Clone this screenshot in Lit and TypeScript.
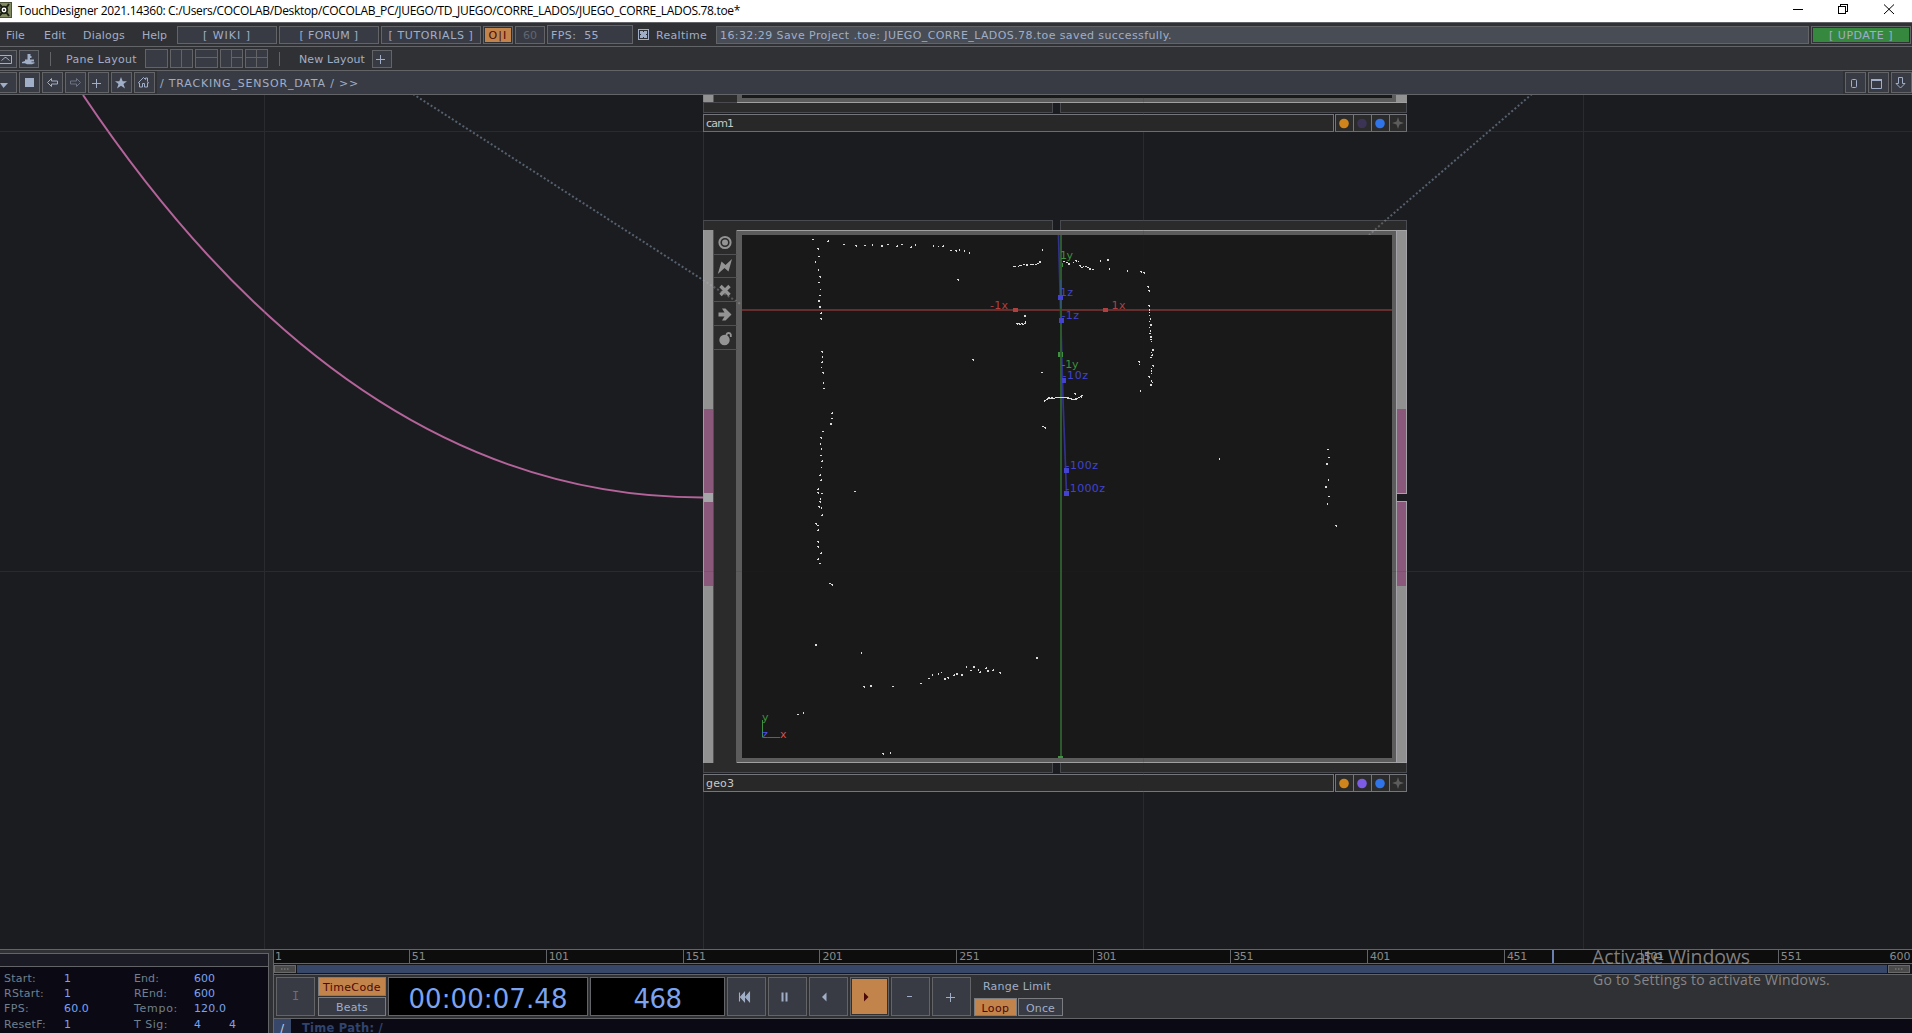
import { LitElement, html, svg, css } from "lit";
import { customElement } from "lit/decorators.js";
import { styleMap } from "lit/directives/style-map.js";

const UI = '"DejaVu Sans", Verdana, sans-serif';
const WIN = '"Open Sans", "Noto Sans", sans-serif';
const pen = document.createElement("canvas").getContext("2d")!;

/** Tracks a label so that it spans the given number of pixels. */
function label(text: string, width: number, size = 11, family = UI, weight = "400") {
  pen.font = `${weight} ${size}px ${family}`;
  const gap = (width + 1 - pen.measureText(text).width) / text.length;
  return html`<span
    class="label"
    style=${styleMap({ fontFamily: family, fontSize: `${size}px`, fontWeight: weight, letterSpacing: `${gap.toFixed(3)}px` })}
    >${text}</span
  >`;
}

const shared = css`
  * {
    box-sizing: border-box;
  }
  .label {
    white-space: pre;
    line-height: 1;
    display: block;
    flex: none;
  }
  svg {
    display: block;
    flex: none;
  }
`;

@customElement("title-bar")
class TitleBar extends LitElement {
  static styles = [
    shared,
    css`
      :host {
        display: flex;
        height: 22px;
        background: #fff;
        color: #000;
        align-items: center;
      }
      .name {
        margin-left: 6px;
        margin-top: 0;
        flex: 1;
      }
    `,
  ];
  render() {
    return html`
      <svg width="12" height="22" viewBox="0 0 12 22">
        <rect x="0" y="2" width="12" height="16" fill="#4c5238" />
        <rect x="0" y="3" width="11" height="14" fill="#828a62" />
        <path d="M-1 4l4 4M9 4l-3 4M-1 16l4-4M9 16l-3-4" stroke="#1c2014" stroke-width="2" />
        <circle cx="4" cy="10" r="4.2" fill="#1c2014" />
        <circle cx="4" cy="10" r="2.4" fill="#fff" />
        <circle cx="4" cy="10" r="1" fill="#1c2014" />
      </svg>
      <div class="name">
        ${label(
          "TouchDesigner 2021.14360: C:/Users/COCOLAB/Desktop/COCOLAB_PC/JUEGO/TD_JUEGO/CORRE_LADOS/JUEGO_CORRE_LADOS.78.toe*",
          721,
          12,
          WIN,
        )}
      </div>
      <svg width="120" height="22" viewBox="1792 0 120 22" fill="none" stroke="#000" shape-rendering="crispEdges">
        <path d="M1793 9.500h10M1838.500 6.500h7v7h-7zM1840.500 6v-1.500h7v7h-2" />
        <path d="M1884 4.500l10 9.500M1894 4.500l-10 9.500" shape-rendering="auto" />
      </svg>
    `;
  }
}

@customElement("menu-bar")
class MenuBar extends LitElement {
  static styles = [
    shared,
    css`
      :host {
        display: block;
        color: #a0aec8;
      }
      .row {
        display: flex;
        height: 24px;
        background: #303134;
        border-top: 1px solid #626468;
      }
      .items {
        width: 177px;
        display: flex;
        padding: 7px 0 0 6px;
        flex: none;
      }
      .btn {
        height: 18px;
        margin: 3px 2px 0 0;
        border: 1px solid #626468;
        background: #383b43;
        display: flex;
        align-items: center;
        justify-content: center;
        flex: none;
      }
      .text {
        padding-top: 1px;
      }
      .link {
        width: 100px;
      }
      .small {
        width: 30px;
      }
      .oi {
        width: 30px;
        color: #4d0808;
        background: #c2844a;
        box-shadow: inset 0 0 0 1px #303134;
      }
      .off {
        color: #626672;
      }
      .fps {
        width: 86px;
        height: 19px;
        margin: 2px 5px 0 0;
        justify-content: flex-start;
        padding-left: 3px;
      }
      .check {
        margin-top: 6px;
      }
      .real {
        width: 60px;
        padding: 7px 0 0 0;
        margin-left: 7px;
      }
      .status {
        flex: 1;
        justify-content: flex-start;
        padding-left: 3px;
        background: #484c54;
      }
      .update {
        width: 100px;
        margin-right: 1px;
        background: #36883f;
        box-shadow: inset 0 0 0 1px #303134;
      }
      .layouts {
        height: 24px;
      }
      .tool {
        width: 20px;
        margin-right: 0;
      }
      .first {
        width: 17px;
        border-left: 0;
        margin-right: 2px;
      }
      .sep {
        width: 1px;
        height: 14px;
        background: #626468;
        margin-top: 5px;
      }
      .pane {
        padding: 7px 0 0 15px;
        width: 94px;
      }
      .grid {
        display: flex;
        gap: 2px;
        padding-top: 2px;
        width: 134px;
      }
      .newl {
        width: 92px;
        padding: 7px 0 0 19px;
      }
      .path {
        height: 25px;
        background: #303134;
        border-bottom: 1px solid #626468;
        gap: 2px;
      }
      .nav {
        width: 21px;
        height: 21px;
        margin: 1px 0 0 0;
      }
      .nav0 {
        width: 17px;
        border-left: 0;
      }
      .crumbs {
        flex: 1;
        background: #383b43;
        padding: 7px 0 0 3px;
      }
    `,
  ];
  render() {
    const layouts = ["", "M11.500 1v17", "M1 8.500h21", "M11.500 1v17M12 8.500h10", "M11.500 1v17M1 8.500h21"];
    return html`
      <div class="row">
        <div class="items">
          <div style="width:38px">${label("File", 18)}</div>
          <div style="width:39px">${label("Edit", 21)}</div>
          <div style="width:59px">${label("Dialogs", 41)}</div>
          ${label("Help", 24)}
        </div>
        <div class="btn text link">${label("[ WIKI ]", 47)}</div>
        <div class="btn text link">${label("[ FORUM ]", 58)}</div>
        <div class="btn text link">${label("[ TUTORIALS ]", 84)}</div>
        <div class="btn text oi">${label("O|I", 18)}</div>
        <div class="btn text small off">${label("60", 13)}</div>
        <div class="btn text fps">${label("FPS:  55", 47)}</div>
        <svg class="check" width="11" height="11" viewBox="0 0 11 11">
          <rect x=".5" y=".5" width="10" height="10" fill="none" stroke="#a0aec8" />
          <path d="M2 2h3v1h1v-1h3v3h-1v1h1v3h-3v-1h-1v1h-3v-3h1v-1h-1z" fill="#a0aec8" />
        </svg>
        <div class="real">${label("Realtime", 50)}</div>
        <div class="btn text status">
          ${label("16:32:29 Save Project .toe: JUEGO_CORRE_LADOS.78.toe saved successfully.", 451)}
        </div>
        <div class="btn text update">${label("[ UPDATE ]", 63)}</div>
      </div>
      <div class="row layouts">
        <div class="btn tool first">
          <svg width="16" height="16" viewBox="0 0 16 16" fill="none" stroke="#a0aec8">
            <path d="M0 4.500h11.500v8H0M1.500 9.500l3.500-3h1l3.500 3" />
          </svg>
        </div>
        <div class="btn tool">
          <svg width="18" height="16" viewBox="0 0 18 16" fill="#a0aec8">
            <path d="M7.500 3h3v2h1v2h-1.500v1.500h4v2h-2.500v.8h3v1l-2.500 1H7l-2-1H2v-1.300l3-1V8.500h2.500z" />
          </svg>
        </div>
        <div class="sep" style="margin-left:11px"></div>
        <div class="pane">${label("Pane Layout", 70)}</div>
        <div class="grid">
          ${layouts.map(
            (d) => html`<svg width="23" height="19" viewBox="0 0 23 19" fill="none" stroke="#626468">
              <rect x=".5" y=".5" width="22" height="18" fill="#383b43" />
              <path d=${d} />
            </svg>`,
          )}
        </div>
        <div class="sep"></div>
        <div class="newl">${label("New Layout", 65)}</div>
        <div class="btn tool">
          <svg width="18" height="16" viewBox="0 0 18 16" stroke="#a0aec8"><path d="M3 8.500h9M7.500 4v9" /></svg>
        </div>
      </div>
      <div class="row path">
        <div class="btn nav nav0">
          <svg width="16" height="19" viewBox="0 0 16 19"><path d="M0 10h8l-4.500 5z" fill="#a0aec8" /></svg>
        </div>
        <div class="btn nav">
          <svg width="19" height="19"><rect x="5" y="5" width="9" height="9" fill="#a0aec8" /></svg>
        </div>
        ${[
          svg`<path d="M4.500 9.500l4-4v2.500h6v3h-6v2.500z" stroke="#a0aec8" fill="none"/>`,
          svg`<path d="M14.500 9.500l-4-4v2.500h-6v3h6v2.500z" stroke="#6d7382" fill="none"/>`,
          svg`<path d="M3 10.500h9M7.500 6v9" stroke="#a0aec8"/>`,
          svg`<path d="M9 4l1.700 4.200H15l-3.500 2.700L13 15.500 9 12.700 5 15.500l1.500-4.600L3 8.200h4.300z" fill="#a0aec8"/>`,
          svg`<path d="M3.500 9.500L8.500 4.500l2 2v-1.500h2v3.500l1 1.500h-1v4h-3v-3.500H7.500v3.500h-3v-4h-1z" stroke="#a0aec8" fill="none"/>`,
        ].map((d) => html`<div class="btn nav"><svg width="19" height="19" viewBox="0 0 19 19">${d}</svg></div>`)}
        <div class="crumbs">${label("/ TRACKING_SENSOR_DATA / >>", 198)}</div>
        <div class="btn nav">
          <svg width="19" height="19" viewBox="0 0 19 19" fill="none" stroke="#a0aec8"><rect x="5.500" y="6.500" width="5" height="8" rx="1" /></svg>
        </div>
        <div class="btn nav">
          <svg width="19" height="19" viewBox="0 0 19 19" fill="none" stroke="#a0aec8"><path d="M2 6.500h11M2.500 6v9.500h10V6M2 7.500h11" /></svg>
        </div>
        <div class="btn nav">
          <svg width="19" height="19" viewBox="0 0 19 19" fill="none" stroke="#a0aec8"><path d="M6.500 4.500h4v6H13l-4.500 4.500L4 10.500h2.500z" /></svg>
        </div>
      </div>
    `;
  }
}

/* x, y and a shape code per scanned point:
   h = 2x1, v = 1x2, s = 2x2, d = single, j and l = corner pieces */
const SCAN = `812,239h 827,240j 817,248l 818,256h 815,261v 818,269v 819,276l 818,282h 820,289d 819,295h 818,300s 819,306s
820,312j 820,318l 821,351l 822,356v 821,361j 821,367d 843,244h 855,245l 864,245h 872,244v 881,245s 887,244h 896,245j 901,244h
910,246j 915,244v 933,245v 938,246d 942,245j 950,250h 955,250l 959,249v 964,250v 969,252v 957,279l 972,359l 1042,249v 1039,261s
1013,266h 1015,266d 1018,266d 1019,265h 1021,265d 1023,264h 1026,264s 1030,264h 1032,264h 1035,264h 1037,263h 1024,315s
1016,323h 1017,324d 1018,323h 1019,324h 1021,323h 1022,324h 1024,323h 1025,321v 1063,261h 1066,262h 1068,263s 1073,262d
1075,260l 1078,261d 1079,265l 1081,267h 1083,266d 1085,266h 1087,267h 1089,268s 1092,269h 1100,260v 1107,259s 1109,268v
1127,270v 1140,271l 1143,272l 1147,286l 1148,290l 1148,305l 1149,309v 1149,312d 1149,315d 1150,318v 1149,321d 1150,324s
1149,327d 1150,330v 1149,333h 1150,336s 1150,339h 1151,341d 1152,349s 1151,352d 1152,354d 1151,355h 1150,357h 1152,365l
1151,368d 1151,370v 1151,373d 1148,376l 1151,380v 1152,382d 1150,384s 1140,390v 1138,361l 1139,364d 1041,372h 1044,401d
1044,400h 1046,399h 1047,398h 1048,397h 1048,398h 1050,398h 1051,397h 1052,398h 1053,398h 1055,397h 1057,397h 1059,397h
1061,397h 1063,397h 1065,397h 1067,397h 1067,398h 1069,398h 1071,398d 1071,399h 1073,399h 1075,398s 1077,398d 1078,397h
1080,396l 1081,395h 1074,393l
1042,426h 1044,427l 1219,458v 1327,449h 1328,457h 1326,463s 1328,479v 1325,486s 1328,496h 1327,503v 1335,525l 822,372l
823,382v 823,388h 831,412j 831,418h 830,423s 822,431h 820,437l 820,443v 821,448v 820,455h 821,460j 821,467d 819,474j 820,479j
817,488j 817,492l 821,493h 820,498v 819,501l 818,506l 821,507v 821,514j 815,523l 817,525h 817,529j 817,541l 817,546l 820,552j
817,558j 819,563h 829,583h 831,584l 854,491h 815,644s 861,652v 1036,657s 966,666v 973,666s 970,670h 978,669v 979,671j
985,667j 987,670s 992,669j 999,672l 941,672d 938,673v 932,674v 928,678h 944,678s 947,677l 953,674j 956,673s 961,674s
920,683h 863,686l 870,685s 892,686h 797,714h 803,712v 882,753l 890,752v`;

const SHAPES: Record<string, string> = {
  h: "h2v1h-2z",
  v: "h1v2h-1z",
  s: "h2v2h-2z",
  d: "h1v1h-1z",
  l: "h2v2h-1v-1h-1z",
  j: "m1 0h1v2h-2v-1h1z",
};
const scanPath = SCAN.trim()
  .split(/\s+/)
  .map((p) => `M${p.slice(0, -1)}${SHAPES[p.slice(-1)]}`)
  .join("");

@customElement("network-editor")
class NetworkEditor extends LitElement {
  static styles = [
    shared,
    css`
      :host {
        display: block;
        height: 854px;
        background: #1b1c20;
        overflow: hidden;
      }
      text {
        font-family: "DejaVu Sans", Verdana, sans-serif;
        font-size: 11px;
      }
      .name {
        fill: #c8c8c8;
        font-size: 11px;
      }
      .r {
        fill: #b04040;
      }
      .g {
        fill: #3f9040;
      }
      .b {
        fill: #4343cf;
      }
    `,
  ];

  private strip(y: number) {
    return svg`<g fill="#2b2b2b" stroke="#4a4b50">
      <rect x="703.500" y=${y + 0.5} width="349" height="10"/>
      <rect x="1060.500" y=${y + 0.5} width="346" height="10"/></g>`;
  }

  private nameRow(y: number, name: string, w: number, viewer: string) {
    return svg`<g stroke="#74767c" fill="#282829">
        <rect x="703.500" y=${y + 0.5} width="630" height="17"/>
        <rect x="1335.500" y=${y + 0.5} width="71" height="17" fill="#2b2b2b"/>
        <path d="M1353.500 ${y}v18M1371.500 ${y}v18M1389.500 ${y}v18"/></g>
      <text class="name" x="706" y=${y + 13} textLength=${w}>${name}</text>
      <circle cx="1344" cy=${y + 9.5} r="4.800" fill="#d0851c"/>
      <circle cx="1362" cy=${y + 9.5} r="4.800" fill=${viewer}/>
      <circle cx="1380" cy=${y + 9.5} r="4.800" fill="#2f74e8"/>
      <path transform="translate(1398 ${y + 9})" d="M0-6L1.500-1.500 6 0 1.500 1.500 0 6-1.500 1.500-6 0-1.500-1.500z" fill="#5c5c5c"/>`;
  }

  private grid(opacity: number) {
    return svg`<g opacity=${opacity} fill="#2a2b30">
      <rect x="264" y="95" width="1" height="854"/><rect x="703" y="95" width="1" height="854" fill="#2d2c3c"/>
      <rect x="1143" y="95" width="1" height="854"/><rect x="1583" y="95" width="1" height="854"/>
      <rect x="0" y="131" width="1912" height="1"/><rect x="0" y="571" width="1912" height="1"/></g>`;
  }

  render() {
    return html`<svg width="1912" height="854" viewBox="0 95 1912 854">
      ${this.grid(1)}
      <path d="M83 95Q353 498 703 497.500" fill="none" stroke="#b4649a" stroke-width="2" />
      <g stroke="#56616f" stroke-width="2" stroke-dasharray="2 2.200">
        <path d="M413 94L703 280" />
        <path d="M1532 94L1386 220" />
      </g>

      <!-- cam1 -->
      <rect x="703" y="95" width="704" height="8" fill="#5c5c5c" />
      <rect x="703" y="95" width="10" height="8" fill="#929292" />
      <rect x="714" y="95" width="23" height="8" fill="#2b2b2b" />
      <rect x="742" y="95" width="650" height="3" fill="#191919" />
      <rect x="737" y="102" width="670" height="1" fill="#a0a0a0" />
      <rect x="1396" y="95" width="11" height="8" fill="#929292" />
      ${this.strip(102)} ${this.nameRow(114, "cam1", 28, "#3c3454")}
      <rect x="737" y="102" width="670" height="1" fill="#a0a0a0" />

      <!-- geo3 -->
      ${this.strip(220)} ${this.strip(762)}
      <rect x="703" y="230" width="704" height="533" fill="#2b2b2b" />
      <rect x="703" y="230" width="10" height="533" fill="#929292" />
      <rect x="703" y="230" width="1" height="533" fill="#aeaeb8" />
      <rect x="713" y="230" width="1" height="533" fill="#515154" />
      <rect x="704" y="409" width="9" height="177" fill="#89587a" />
      <rect x="704" y="493" width="9" height="9" fill="#a4a6a8" />
      <rect x="736" y="230" width="661" height="533" fill="#5c5c5c" />
      <rect x="737" y="230" width="670" height="1" fill="#a0a0a0" />
      <rect x="737" y="762" width="670" height="1" fill="#a0a0a0" />
      <rect x="1396" y="230" width="11" height="533" fill="#a4a4a8" />
      <rect x="1397" y="231" width="9" height="531" fill="#909090" />
      <rect x="1397" y="409" width="9" height="177" fill="#89587a" />
      <rect x="1397" y="493" width="10" height="9" fill="#a4a4a8" />
      <rect x="1397" y="494" width="10" height="7" fill="#1b1c20" />
      <g stroke="#b0b4bc" stroke-width="2" stroke-dasharray="2 2.200" opacity=".35">
        <path d="M703 280L742 305" />
        <path d="M1386 220L1369 235" />
      </g>
      <rect x="742" y="235" width="650" height="523" fill="#191919" />
      <path d="M714 254.500h23M714 277.500h23M714 301.500h23M714 325.500h23M714 349.500h23" stroke="#515154" />
      <g fill="#949494">
        <circle cx="725" cy="242.500" r="5.600" fill="none" stroke="#949494" stroke-width="2" />
        <circle cx="725" cy="242.500" r="3" />
        <path d="M732 259L728.500 271.500 724.500 268 717.800 274 721.500 261.500 725.500 265z" />
        <path d="M720.500 286l9 9M729.500 286l-9 9" stroke="#949494" stroke-width="3.400" />
        <path d="M718.500 312.500h6l-2.500-4h3.500l6 6-6 6h-3.500l2.500-4h-6z" />
        <circle cx="724.500" cy="340" r="5.200" />
        <path d="M726.500 337v-2.500a2.300 2.300 0 0 1 4.300 0v2.500" fill="none" stroke="#949494" stroke-width="1.800" />
      </g>
      ${this.nameRow(774, "geo3", 28, "#7c5ce4")}
      ${this.grid(0.12)}

      <!-- viewer axes -->
      <rect x="742" y="309" width="650" height="2" fill="#672e2e" />
      <path d="M1058.500 235L1060.500 309L1063 400L1066.500 493" stroke="#32328c" stroke-width="1.700" fill="none" />
      <rect x="1060" y="235" width="2" height="523" fill="#2d592e" />
      <path d="M1060.800 280v28" stroke="#33558f" />
      <path d=${scanPath} fill="#dcdcdc" shape-rendering="crispEdges" />
      <g class="r">
        <rect x="1013" y="308" width="5" height="4" /><rect x="1103" y="308" width="5" height="4" />
        <text x="990" y="309" textLength="18">-1x</text><text x="1111.500" y="309" textLength="14">1x</text>
      </g>
      <g class="g">
        <rect x="1062" y="263" width="1" height="4" />
        <rect x="1058" y="352" width="2" height="5" /><rect x="1062" y="352" width="1" height="5" />
        <rect x="1058" y="756" width="5" height="2" />
        <text x="1060" y="259" textLength="13">1y</text><text x="1061.500" y="368" textLength="17">-1y</text>
      </g>
      <g class="b">
        <rect x="1058" y="295" width="5" height="5" /><rect x="1059" y="318" width="5" height="5" />
        <rect x="1062" y="378" width="4" height="5" /><rect x="1064" y="468" width="5" height="5" />
        <rect x="1064" y="491" width="5" height="5" />
        <text x="1060" y="296" textLength="13">1z</text><text x="1061.500" y="319" textLength="17.500">-1z</text>
        <text x="1062.500" y="379" textLength="25.500">-10z</text><text x="1065.500" y="469" textLength="32.500">-100z</text>
        <text x="1065.500" y="492" textLength="39.500">-1000z</text>
      </g>
      <path d="M762.500 720v17" stroke="#3f9040" />
      <path d="M764 737.500h16" stroke="#b04040" />
      <text class="g" x="762" y="721">y</text>
      <text x="762" y="738" fill="#5050f0">z</text>
      <text x="780" y="738" fill="#d05050">x</text>
    </svg>`;
  }
}

@customElement("time-line")
class TimeLine extends LitElement {
  static styles = [
    shared,
    css`
      :host {
        display: flex;
        height: 84px;
        border-top: 1px solid #626468;
        background: #303134;
        color: #a0aec8;
        overflow: hidden;
      }
      .info {
        width: 269px;
        margin-top: 3px;
        border: 1px solid #626468;
        border-left: 0;
        border-bottom: 0;
        background: #0b0a14;
        flex: none;
      }
      .head {
        height: 13px;
        background: #1a1b24;
        border-bottom: 1px solid #626468;
      }
      .cols {
        display: grid;
        grid-template-columns: 60px 70px 60px 35px 30px;
        grid-auto-rows: 15.200px;
        padding: 6px 0 0 4px;
        color: #6f8090;
      }
      .v {
        color: #7ba3f0;
      }
      .main {
        flex: 1;
        margin-left: 4px;
        border-left: 1px solid #626468;
        display: flex;
        flex-direction: column;
      }
      .ruler {
        height: 14px;
        background: #0d0d0d;
        border-bottom: 1px solid #626468;
        display: flex;
        color: #8a8a8a;
        position: relative;
        flex: none;
      }
      .tick {
        width: 136.900px;
        padding: 1px 0 0 2px;
        border-left: 1px solid #626468;
        flex: none;
      }
      .tick0 {
        width: 134.800px;
        padding-left: 1px;
        border: 0;
      }
      .last {
        width: 111.700px;
      }
      .head-mark {
        position: absolute;
        left: 1278px;
        top: 0;
        width: 2px;
        height: 13px;
        background: #6a7fb0;
      }
      .scroll {
        height: 11px;
        background: #14151a;
        border-bottom: 1px solid #626468;
        display: flex;
        padding: 1px 2px 1px 0;
        gap: 1px;
        flex: none;
      }
      .grip {
        width: 22px;
        background: #4a4a4a;
        border: 1px solid #6a6a6a;
        display: flex;
        align-items: center;
        justify-content: center;
      }
      .span {
        flex: 1;
        background: #374769;
      }
      .ctl {
        height: 44px;
        display: flex;
        padding: 2px 0 0 2px;
        gap: 2px;
        border-bottom: 1px solid #626468;
        flex: none;
      }
      .b {
        border: 1px solid #626468;
        background: #383b43;
        display: flex;
        align-items: center;
        justify-content: center;
        flex: none;
      }
      .cell {
        width: 39px;
        height: 39px;
      }
      .mode {
        display: flex;
        flex-direction: column;
        gap: 1px;
        margin-left: 1px;
      }
      .mode .b {
        width: 68px;
        height: 19px;
        padding-top: 2px;
        border-color: #7a7c80;
      }
      .ctl .on {
        background: #c2844a;
        color: #4d0808;
      }
      .cell.on {
        box-shadow: inset 0 0 0 1px #303134;
      }
      .lcd {
        background: #000;
        color: #7ba3f0;
        height: 39px;
        padding-top: 5px;
      }
      .tc {
        width: 200px;
      }
      .fr {
        width: 135px;
      }
      .i {
        color: #6c6f78;
        font: 12px "Liberation Mono", monospace;
        padding-top: 1px;
      }
      .range {
        padding: 4px 0 0 1px;
      }
      .rl {
        padding-left: 9px;
        height: 17px;
      }
      .pair {
        display: flex;
        gap: 1px;
      }
      .pair .b {
        height: 18px;
        width: 43px;
        padding-top: 2px;
        border-color: #7a7c80;
      }
      .pair .once {
        width: 45px;
      }
      .foot {
        flex: 1;
        background: #0b0a14;
        display: flex;
        color: #30446e;
        overflow: hidden;
      }
      .slash {
        width: 17px;
        background: #374769;
        color: #c0cce0;
        padding: 4px 0 0 6px;
        margin-right: 11px;
      }
      .tp {
        padding-top: 4px;
      }
    `,
  ];
  render() {
    const rows: [string, number, string, number, string, number, string, number, string][] = [
      ["Start:", 31, "1", 6, "End:", 24, "600", 20, ""],
      ["RStart:", 39, "1", 6, "REnd:", 32, "600", 20, ""],
      ["FPS:", 24, "60.0", 24, "Tempo:", 43, "120.0", 31, ""],
      ["ResetF:", 41, "1", 6, "T Sig:", 33, "4", 6, "4"],
    ];
    const icons = [
      svg`<path d="M11.500 14.500v9M12.500 19l4-4.500v9zM17.500 19l4-4.500v9z" stroke="#a0aec8" stroke-width="1.100" fill="#a0aec8" />`,
      svg`<path d="M13.500 14.500v9M17.500 14.500v9" stroke="#a0aec8" stroke-width="2" />`,
      svg`<path d="M12 19l4.500-4.500v9z" fill="#a0aec8" />`,
      svg`<path d="M17.500 19l-4.500-4.500v9z" fill="#4d0808" />`,
      svg`<path d="M15 18.500h5" stroke="#a0aec8" />`,
      svg`<path d="M13 19.500h9M17.500 15v9" stroke="#a0aec8" />`,
    ];
    return html`
      <div class="info">
        <div class="head"></div>
        <div class="cols">
          ${rows.map(
            (r) => html`${label(r[0], r[1])}
              <div class="v">${label(r[2], r[3])}</div>
              ${label(r[4], r[5])}
              <div class="v">${label(r[6], r[7])}</div>
              <div class="v">${label(r[8], 6)}</div>`,
          )}
        </div>
      </div>
      <div class="main">
        <div class="ruler">
          <div class="tick tick0">${label("1", 6)}</div>
          ${[51, 101, 151, 201, 251, 301, 351, 401, 451, 501].map(
            (n) => html`<div class="tick">${label(String(n), n < 100 ? 13 : 19)}</div>`,
          )}
          <div class="tick last">${label("551", 20)}</div>
          <div style="padding-top:1px">${label("600", 20)}</div>
          <div class="head-mark"></div>
        </div>
        <div class="scroll">
          <div class="grip"><svg width="8" height="2"><path d="M0 1h1.500M3 1h1.500M6 1h1.500" stroke="#8a8a8a" /></svg></div>
          <div class="span"></div>
          <div class="grip"><svg width="8" height="2"><path d="M0 1h1.500M3 1h1.500M6 1h1.500" stroke="#8a8a8a" /></svg></div>
        </div>
        <div class="ctl">
          <div class="b cell i">I</div>
          <div class="mode">
            <div class="b on">${label("TimeCode", 57)}</div>
            <div class="b">${label("Beats", 31)}</div>
          </div>
          <div class="b lcd tc">${label("00:00:07.48", 158, 26)}</div>
          <div class="b lcd fr">${label("468", 47, 26)}</div>
          ${icons.map(
            (d, i) => html`<div class="b cell ${i === 3 ? "on" : ""}"><svg width="37" height="37" viewBox="0 0 37 37">${d}</svg></div>`,
          )}
          <div class="range">
            <div class="rl">${label("Range Limit", 67)}</div>
            <div class="pair">
              <div class="b on">${label("Loop", 27)}</div>
              <div class="b once">${label("Once", 28)}</div>
            </div>
          </div>
        </div>
        <div class="foot">
          <div class="slash">${label("/", 5, 12)}</div>
          <div class="tp">${label("Time Path: /", 80, 11.5, UI, "700")}</div>
        </div>
      </div>
    `;
  }
}

@customElement("app-root")
class AppRoot extends LitElement {
  static styles = [
    shared,
    css`
      :host {
        display: block;
        position: relative;
        width: 1912px;
        height: 1033px;
        overflow: hidden;
        background: #1b1c20;
      }
      .watermark {
        position: absolute;
        left: 1592px;
        top: 947px;
        color: rgba(160, 160, 162, 0.78);
      }
      .sub {
        margin: 6px 0 0 1px;
      }
    `,
  ];
  render() {
    return html`
      <title-bar></title-bar>
      <menu-bar></menu-bar>
      <network-editor></network-editor>
      <time-line></time-line>
      <div class="watermark">
        ${label("Activate Windows", 157, 19.5, WIN)}
        <div class="sub">${label("Go to Settings to activate Windows.", 236, 14, WIN)}</div>
      </div>
    `;
  }
}
